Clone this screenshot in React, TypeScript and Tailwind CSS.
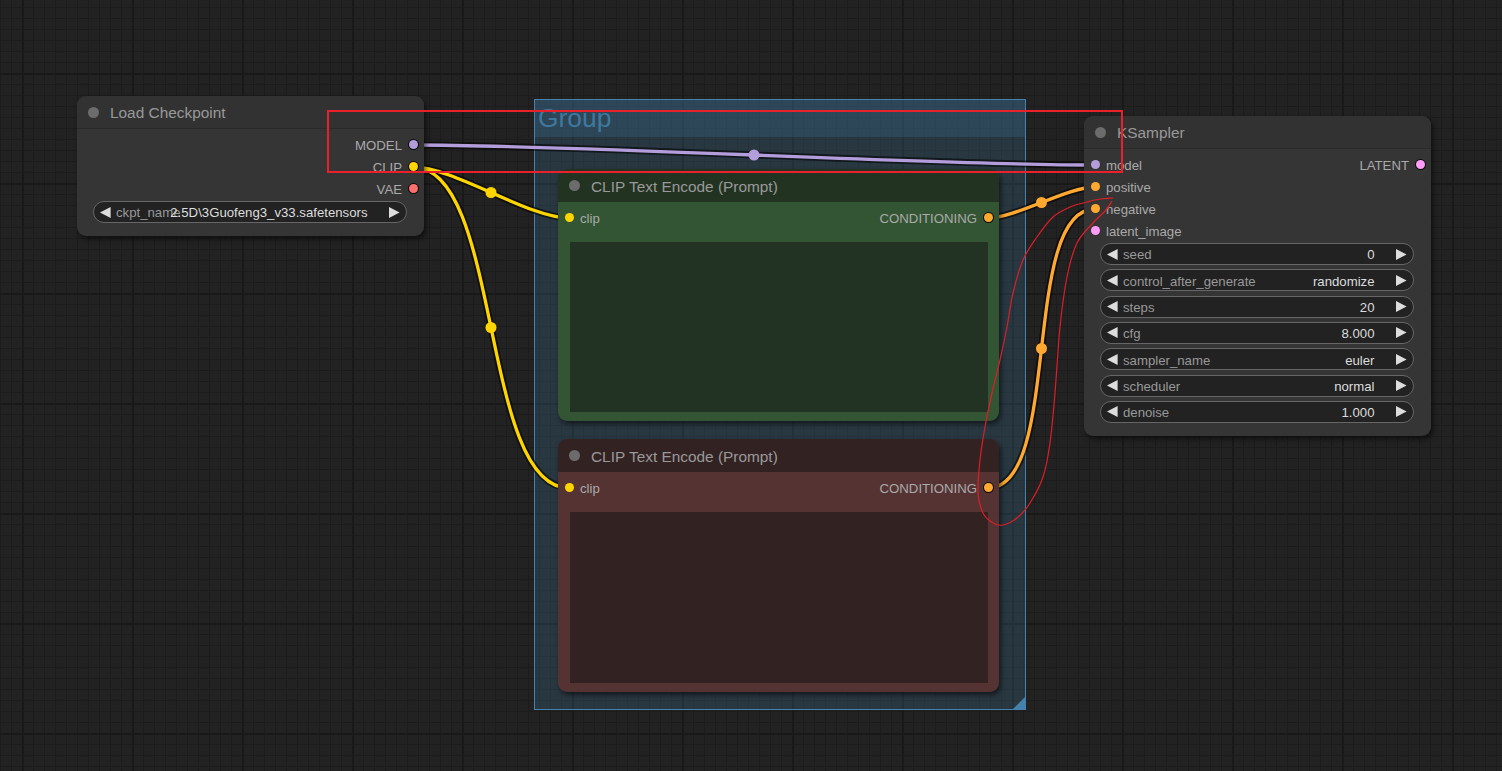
import React from "react";

type Pt = { x: number; y: number };

// litegraph style spline: handles pushed out horizontally by a quarter of the distance
const wirePath = (a: Pt, b: Pt) => {
    const d = Math.hypot(b.x - a.x, b.y - a.y) * 0.25;
    return `M${a.x} ${a.y} C${a.x + d} ${a.y} ${b.x - d} ${b.y} ${b.x} ${b.y}`;
};

const wires = [
    { a: { x: 413, y: 145 }, b: { x: 1095, y: 165 }, color: "#b39ddb" },
    { a: { x: 413, y: 167 }, b: { x: 569, y: 218 }, color: "#ffd500" },
    { a: { x: 413, y: 167 }, b: { x: 569, y: 488 }, color: "#ffd500" },
    { a: { x: 988, y: 218 }, b: { x: 1095, y: 187 }, color: "#ffa931" },
    { a: { x: 988, y: 488 }, b: { x: 1095, y: 209 }, color: "#ffa931" },
];

const scribble: [number, number][] = [
    [1113, 198], [1100, 199], [1087, 202], [1070, 207], [1053, 217], [1037, 237], [1023, 260],
    [1013, 293], [1007, 327], [1000, 360], [992, 393], [985, 427], [980, 460], [978, 493],
    [983, 513], [993, 523], [1003, 525], [1017, 518], [1030, 503], [1043, 477], [1050, 443],
    [1055, 393], [1060, 327], [1067, 277], [1077, 243], [1093, 223], [1106, 210], [1112, 201],
];

const smooth = (pts: [number, number][]) => {
    let d = `M${pts[0][0]} ${pts[0][1]}`;
    for (let i = 0; i < pts.length - 1; i++) {
        const p0 = pts[i - 1] || pts[i];
        const p1 = pts[i];
        const p2 = pts[i + 1];
        const p3 = pts[i + 2] || p2;
        const c1 = [p1[0] + (p2[0] - p0[0]) / 6, p1[1] + (p2[1] - p0[1]) / 6];
        const c2 = [p2[0] - (p3[0] - p1[0]) / 6, p2[1] - (p3[1] - p1[1]) / 6];
        d += ` C${c1[0]} ${c1[1]} ${c2[0]} ${c2[1]} ${p2[0]} ${p2[1]}`;
    }
    return d;
};

const Dot = ({ color, ring }: { color: string; ring?: boolean }) => (
    <span className={`w-[9px] h-[9px] rounded-full shrink-0 ${color} ${ring ? "ring-1 ring-black/80" : ""}`} />
);

const Slot = ({ input, output }: {
    input?: { label: string; color: string };
    output?: { label: string; color: string };
}) => (
    <div className="h-[22px] flex items-center justify-between px-[6.5px] text-[13.2px] text-[#aaa]">
        <div className="flex items-center gap-[6.5px]">
            {input && <Dot color={input.color} />}
            {input && <span className="pt-[2px]">{input.label}</span>}
        </div>
        <div className="flex items-center gap-[6.5px]">
            {output && <span className="pt-[2px]">{output.label}</span>}
            {output && <Dot color={output.color} ring />}
        </div>
    </div>
);

const Arrow = ({ right }: { right?: boolean }) => (
    <svg width="11" height="11" viewBox="0 0 11 11" className="shrink-0">
        <path d={right ? "M0 0 L10.6 5.5 L0 11Z" : "M10.6 0 L0 5.5 L10.6 11Z"} fill="#ddd" />
    </svg>
);

const Widget = ({ label, value }: { label: string; value: string }) => (
    <div className="h-[22px] flex items-center rounded-full border border-[#666] bg-[#222] px-[6px] text-[13.2px]">
        <Arrow />
        <div className="flex-1 grid grid-cols-[minmax(0,1fr)] ml-[5px] mr-[21px] leading-none pt-[2px]">
            <span className="col-start-1 row-start-1 text-[#999] whitespace-nowrap">{label}</span>
            <span className="col-start-1 row-start-1 justify-self-end text-[#ddd] whitespace-nowrap">{value}</span>
        </div>
        <Arrow right />
    </div>
);

const Node = ({ className, title, titleBg, children }: {
    className: string;
    title: string;
    titleBg: string;
    children: React.ReactNode;
}) => (
    <div className={`absolute flex flex-col rounded-[9px] overflow-hidden shadow-[2px_3px_5px_rgba(0,0,0,0.55)] ${className}`}>
        <div className={`h-[33px] shrink-0 flex items-center pl-[10.5px] gap-[11.5px] ${titleBg}`}>
            <span className="w-[11px] h-[11px] rounded-full bg-[#6c6c6c]" />
            <span className="text-[15.4px] text-[#999] pt-[2px]">{title}</span>
        </div>
        {children}
    </div>
);

const samplerWidgets = [
    { label: "seed", value: "0" },
    { label: "control_after_generate", value: "randomize" },
    { label: "steps", value: "20" },
    { label: "cfg", value: "8.000" },
    { label: "sampler_name", value: "euler" },
    { label: "scheduler", value: "normal" },
    { label: "denoise", value: "1.000" },
];

export default function App() {
    return (
        <div className="relative w-[1502px] h-[771px] overflow-hidden bg-[#222] font-['Liberation_Sans',Arial,sans-serif] [background-image:linear-gradient(to_right,#191919_2px,transparent_2px),linear-gradient(to_bottom,#191919_2px,transparent_2px),linear-gradient(to_right,#1c1c1c_1px,transparent_1px),linear-gradient(to_bottom,#1c1c1c_1px,transparent_1px)] [background-size:110px_110px,110px_110px,11px_11px,11px_11px] [background-position:22px_0,0_73px,0_0,0_7px]">

            {/* group */}
            <div className="absolute left-[534px] top-[99px] w-[492px] h-[611px] border border-[#4581ad] bg-[#3f789e]/25">
                <div className="h-[37px] bg-[#3f789e]/25 flex items-center pl-[3px] text-[26.4px] text-[#3f789e] leading-none">
                    Group
                </div>
                <svg width="12" height="12" viewBox="0 0 12 12" className="absolute right-0 bottom-0">
                    <path d="M12 0 L12 12 L0 12Z" fill="#4581ad" />
                </svg>
            </div>

            {/* links */}
            <svg width="1502" height="771" className="absolute left-0 top-0">
                {wires.map((w, i) => (
                    <path key={"b" + i} d={wirePath(w.a, w.b)} fill="none" stroke="rgba(0,0,0,0.55)" strokeWidth="7" />
                ))}
                {wires.map((w, i) => (
                    <g key={"w" + i}>
                        <path d={wirePath(w.a, w.b)} fill="none" stroke={w.color} strokeWidth="3.3" />
                        <circle cx={(w.a.x + w.b.x) / 2} cy={(w.a.y + w.b.y) / 2} r="5.5" fill={w.color} />
                    </g>
                ))}
            </svg>

            <Node className="left-[77px] top-[96px] w-[347px] h-[140px] bg-[#353535]" title="Load Checkpoint" titleBg="bg-[#323232] border-b border-[#2a2a2a]">
                <div className="pt-[5px]">
                    <Slot output={{ label: "MODEL", color: "bg-[#b39ddb]" }} />
                    <Slot output={{ label: "CLIP", color: "bg-[#ffd500]" }} />
                    <Slot output={{ label: "VAE", color: "bg-[#ff6e6e]" }} />
                </div>
                <div className="pl-[16px] pr-[17.5px] mt-[1px]">
                    <Widget label="ckpt_name" value="2.5D\3Guofeng3_v33.safetensors" />
                </div>
            </Node>

            <Node className="left-[558px] top-[169px] w-[441px] h-[252px] bg-[#335533]" title="CLIP Text Encode (Prompt)" titleBg="bg-[#223322]">
                <div className="pt-[5px]">
                    <Slot input={{ label: "clip", color: "bg-[#ffd500]" }} output={{ label: "CONDITIONING", color: "bg-[#ffa931]" }} />
                </div>
                <div className="flex-1 ml-[12px] mr-[11px] mt-[13px] mb-[9px] bg-[#233323]" />
            </Node>

            <Node className="left-[558px] top-[439px] w-[441px] h-[253px] bg-[#553333]" title="CLIP Text Encode (Prompt)" titleBg="bg-[#332222]">
                <div className="pt-[5px]">
                    <Slot input={{ label: "clip", color: "bg-[#ffd500]" }} output={{ label: "CONDITIONING", color: "bg-[#ffa931]" }} />
                </div>
                <div className="flex-1 ml-[12px] mr-[11px] mt-[13px] mb-[9px] bg-[#332222]" />
            </Node>

            <Node className="left-[1084px] top-[116px] w-[347px] h-[320px] bg-[#353535]" title="KSampler" titleBg="bg-[#323232] border-b border-[#2a2a2a]">
                <div className="pt-[5px]">
                    <Slot input={{ label: "model", color: "bg-[#b39ddb]" }} output={{ label: "LATENT", color: "bg-[#ff9cf9]" }} />
                    <Slot input={{ label: "positive", color: "bg-[#ffa931]" }} />
                    <Slot input={{ label: "negative", color: "bg-[#ffa931]" }} />
                    <Slot input={{ label: "latent_image", color: "bg-[#ff9cf9]" }} />
                </div>
                <div className="flex flex-col gap-[4.33px] pl-[16px] pr-[17.5px] mt-[1px]">
                    {samplerWidgets.map((w) => (
                        <Widget key={w.label} label={w.label} value={w.value} />
                    ))}
                </div>
            </Node>

            {/* red markup drawn over the screenshot */}
            <svg width="1502" height="771" className="absolute left-0 top-0 pointer-events-none">
                <rect x="328" y="111" width="794" height="61" fill="none" stroke="#e8212a" strokeWidth="2" />
                <path d={smooth(scribble)} fill="none" stroke="#dc1f28" strokeWidth="1.2" />
            </svg>
        </div>
    );
}
